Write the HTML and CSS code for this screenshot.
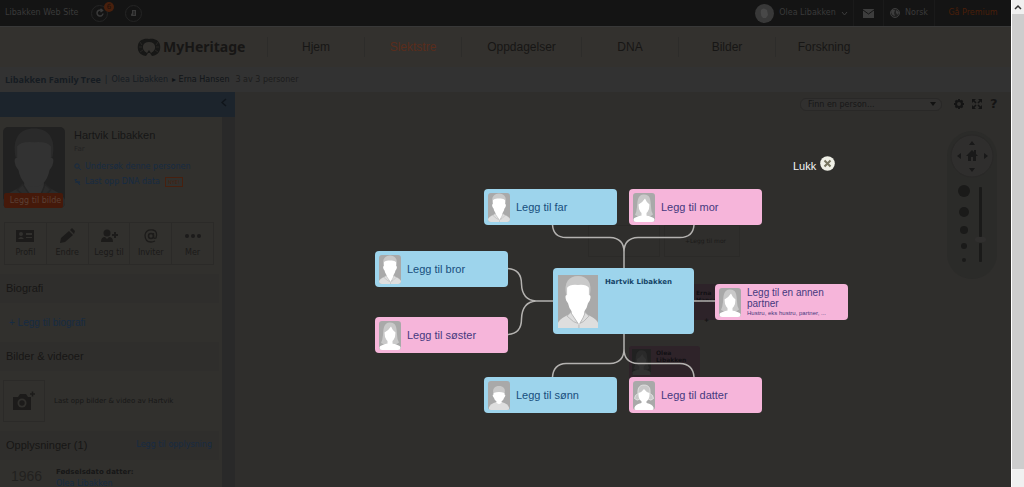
FILE: index.html
```
<!DOCTYPE html>
<html lang="no">
<head>
<meta charset="utf-8">
<title>MyHeritage</title>
<link rel="stylesheet" href="styles.css">
</head>
<body>
<svg class="defs" aria-hidden="true">
  <symbol id="man" viewBox="0 0 44 58" preserveAspectRatio="none">
    <rect width="44" height="58" fill="var(--ph-bg)"/>
    <path d="M0 58V52Q2 47 15 42H29Q42 47 44 52V58Z" fill="var(--ph-cloth)"/>
    <path d="M15 36V44L23 55L29 44V36Z" fill="var(--ph-face)"/>
    <path d="M14 41L10 45L17 51L22 53Q18 47 14 41ZM30 41L34 45L28 51L24 53Q28 47 30 41Z" fill="var(--ph-cloth)" stroke="var(--ph-line)"/>
    <path d="M23 53V58" stroke="var(--ph-line)"/>
    <path d="M9 22C6 8 12 1 22 1S38 8 35 22Z" fill="var(--ph-hair)"/>
    <path d="M10 22V14Q13 10 22 11Q31 10 34 14V22Q37 22 35 28L33 31Q32 37 28 41Q22 45 16 41Q12 37 11 31L9 28Q7 22 10 22Z" fill="var(--ph-face)"/>
  </symbol>
  <symbol id="woman" viewBox="0 0 44 58" preserveAspectRatio="none">
    <rect width="44" height="58" fill="var(--ph-bg)"/>
    <path d="M22 3C8 3 9 19 8 28Q7 38 4 44Q12 49 18 45H28Q34 49 40 43Q36 37 36 27C35 13 35 3 22 3Z" fill="var(--ph-hair)"/>
    <path d="M1 58V52Q3 48 17 45V36H27V45Q41 48 43 52V58Z" fill="var(--ph-face)"/>
    <path d="M24 11Q19 19 11 23Q11 33 15 38Q22 44 29 38Q33 33 33 23Q27 19 24 11Z" fill="var(--ph-face)"/>
  </symbol>
  <symbol id="boy" viewBox="0 0 44 58" preserveAspectRatio="none">
    <rect width="44" height="58" fill="var(--ph-bg)"/>
    <path d="M2 58V53Q4 45 17 42H27Q40 45 42 53V58Z" fill="var(--ph-cloth)"/>
    <path d="M17 36H27V43Q22 49 17 43Z" fill="var(--ph-face)"/>
    <path d="M11 25C8 15 14 10 22 10S36 15 33 25Z" fill="var(--ph-hair)"/>
    <path d="M11 24Q22 20 33 24V27Q36 27 34 31L32 34Q31 38 28 40Q22 44 16 40Q13 38 12 34L10 31Q8 27 11 27Z" fill="var(--ph-face)"/>
  </symbol>
  <symbol id="girl" viewBox="0 0 44 58" preserveAspectRatio="none">
    <rect width="44" height="58" fill="var(--ph-bg)"/>
    <path d="M22 8C11 8 9 17 10 25Q3 28 3 35Q8 41 14 36H30Q36 41 41 35Q41 28 34 25C35 16 33 8 22 8Z" fill="var(--ph-hair)" stroke="var(--ph-face)"/>
    <path d="M3 58V53Q5 46 17 44V37H27V44Q39 46 41 53V58Z" fill="var(--ph-face)"/>
    <path d="M22 16Q18 22 11 24Q10 34 15 39Q22 44 29 39Q34 34 33 24Q26 22 22 16Z" fill="var(--ph-face)"/>
  </symbol>
</svg>

<div class="page">
  <header class="topbar">
    <span class="site">Libakken Web Site</span>
    <button class="round" aria-label="Treff"><svg width="10" height="10" viewBox="0 0 10 10"><path d="M8 5.500A3 3 0 1 1 6.500 2.400M5.500 .8L7.500 2.500L5.500 4" fill="none" stroke="#3a3a3a" stroke-width="1.500"/></svg><span class="badge">6</span></button>
    <button class="round" aria-label="Varsler"><svg width="10" height="10" viewBox="0 0 10 10"><path d="M3 2H7V8H3Q1.500 8 2 6.500L3 5Z" fill="#3a3a3a"/><path d="M4 4H6M4 6H6" stroke="#141414"/></svg></button>
    <div class="account">
      <button class="user"><span class="face"><svg width="19" height="19" viewBox="0 0 19 19"><circle cx="9.500" cy="9.500" r="9.500" fill="#383838"/><path d="M6 6Q8 3 12 6L13 11L11 14H8Q5 12 6 6Z" fill="#484848"/></svg></span>Olea Libakken<svg width="7" height="5" viewBox="0 0 7 5"><path d="M1 1L3.500 4L6 1" fill="none" stroke="#3d3d3d"/></svg></button>
      <a class="mail" href="#" aria-label="Innboks"><svg width="11" height="9" viewBox="0 0 11 9"><rect width="11" height="9" fill="#3d3d3d"/><path d="M0 1L5.500 5L11 1" fill="none" stroke="#151515"/></svg></a>
      <a class="lang" href="#"><svg width="10" height="10" viewBox="0 0 10 10"><circle cx="5" cy="5" r="4.500" fill="#202020" stroke="#3d3d3d"/><path d="M2 1.500L5 2L4 5L5 8L2.500 7L1 4ZM6 2L9 4L8 7L6 5Z" fill="#3d3d3d"/></svg>Norsk</a>
      <a class="premium" href="#">Gå Premium</a>
    </div>
  </header>

  <nav class="mainnav">
    <a class="logo" href="#"><svg width="24" height="19" viewBox="0 0 24 19"><path d="M9 18C2 17 0 12 1 7S7 0 12 1C17 0 22 2 23 7S22 17 15 18L13 15H11Z" fill="#171716"/><path d="M10 15Q5 12 6 8T12 4T18 8T14 15L12 12Z" fill="#33312e"/><path d="M3 4L5 7M2 9H5M3 14L6 12M21 4L19 7M22 9H19M21 14L18 12" stroke="#33312e" stroke-width=".6"/></svg><span>MyHeritage</span></a>
    <a class="item" href="#">Hjem</a>
    <a class="item on" href="#">Slektstre</a>
    <a class="item wide" href="#">Oppdagelser</a>
    <a class="item" href="#">DNA</a>
    <a class="item" href="#">Bilder</a>
    <a class="item" href="#">Forskning</a>
  </nav>

  <div class="crumbs"><strong>Libakken Family Tree</strong><span class="bar">|</span><span>Olea Libakken</span><b>▸ Erna Hansen</b><span class="count">3 av 3 personer</span></div>

  <div class="body">
    <aside class="side">
      <div class="bluebar"><button aria-label="Skjul panel"><svg width="6" height="9" viewBox="0 0 6 9"><path d="M5 1L1 4.500L5 8" fill="none" stroke="#10151a" stroke-width="1.500"/></svg></button></div>
      <div class="sidemain">
        <div class="panel">
          <div class="profile">
            <div class="photo"><svg class="dim"><use href="#man"/></svg><button>Legg til bilde</button></div>
            <div class="facts">
              <h2>Hartvik Libakken</h2>
              <span class="rel">Far</span>
              <a href="#"><svg width="7" height="7" viewBox="0 0 7 7"><circle cx="3" cy="3" r="2.200" fill="none" stroke="#172b42"/><path d="M4.500 4.500L7 7" stroke="#172b42"/></svg>Undersøk denne personen</a>
              <a href="#"><svg width="7" height="7" viewBox="0 0 7 7"><path d="M1 1Q1 4 6 4M1 4Q4 3 6 7M3 1L1 3M6 4L4 6" fill="none" stroke="#172b42"/></svg>Last opp DNA data<span class="new">NYE!</span></a>
            </div>
          </div>
          <div class="actions">
            <button><svg width="18" height="16" viewBox="0 0 18 16"><rect y="2" width="18" height="12" fill="#1c1b1a"/><circle cx="5" cy="6" r="2" fill="#31302d"/><path d="M2 11Q5 7 8 11ZM10 5H16V7H10ZM10 9H16V10H10Z" fill="#31302d"/></svg>Profil</button>
            <button><svg width="18" height="16" viewBox="0 0 18 16"><path d="M2 15L3 10L11 3L15 7L7 14ZM12 2L14 0L17 3L16 6Z" fill="#1c1b1a"/></svg>Endre</button>
            <button><svg width="18" height="16" viewBox="0 0 18 16"><circle cx="7" cy="5" r="3.500" fill="#1c1b1a"/><path d="M1 14Q1 9 5 9L7 11L9 9Q13 9 13 14ZM12 6H18V8H12ZM14 4H16V10H14Z" fill="#1c1b1a"/></svg>Legg til</button>
            <button><svg width="18" height="16" viewBox="0 0 18 16"><circle cx="9" cy="8" r="2.500" fill="none" stroke="#1c1b1a" stroke-width="1.500"/><path d="M11.500 5V9Q12 11 14 10Q16 3 11 2Q4 1 3 7Q3 14 9 14Q11 14 13 13" fill="none" stroke="#1c1b1a" stroke-width="1.300"/></svg>Inviter</button>
            <button><svg width="18" height="16" viewBox="0 0 18 16"><circle cx="3" cy="8" r="2" fill="#1c1b1a"/><circle cx="9" cy="8" r="2" fill="#1c1b1a"/><circle cx="15" cy="8" r="2" fill="#1c1b1a"/></svg>Mer</button>
          </div>
          <h3>Biografi</h3>
          <div class="bio"><a href="#">+ Legg til biografi</a></div>
          <h3>Bilder &amp; videoer</h3>
          <div class="media"><button aria-label="Last opp bilder"><svg width="24" height="20" viewBox="0 0 24 20"><path d="M1 6H6L8 3H14L16 6H19V19H1Z" fill="#1c1b1a"/><circle cx="10" cy="12" r="4.500" fill="#31302d"/><circle cx="10" cy="12" r="2.700" fill="#1c1b1a"/><path d="M18 3H23M20.500 .5V5.500" stroke="#1c1b1a" stroke-width="1.500"/></svg></button><span>Last opp bilder &amp; video av Hartvik</span></div>
          <h3>Opplysninger (1)<a href="#">Legg til opplysning</a></h3>
          <div class="event"><span class="year">1966</span><div><b>Fødselsdato datter:</b><a href="#">Olea Libakken</a></div></div>
        </div>
        <div class="sidescroll"></div>
      </div>
    </aside>

    <main class="tree">
      <div class="tools">
        <input type="text" aria-label="Finn en person" placeholder="Finn en person...">
        <button aria-label="Innstillinger"><svg width="10" height="10" viewBox="0 0 10 10"><circle cx="5" cy="5" r="3" fill="none" stroke="#141414" stroke-width="2"/><path d="M5 0V1.500M5 8.500V10M0 5H1.500M8.500 5H10M1.500 1.500L2.500 2.500M7.500 7.500L8.500 8.500M8.500 1.500L7.500 2.500M2.500 7.500L1.500 8.500" stroke="#141414" stroke-width="2"/></svg></button>
        <button aria-label="Fullskjerm"><svg width="10" height="10" viewBox="0 0 10 10"><path d="M0 0H4L0 4ZM10 0V4L6 0ZM0 10V6L4 10ZM10 10H6L10 6Z" fill="#141414"/><path d="M1 1L4 4M9 1L6 4M1 9L4 6M9 9L6 6" stroke="#141414" stroke-width="1.500"/></svg></button>
        <button class="help" aria-label="Hjelp">?</button>
      </div>
      <svg class="zoomer" width="52" height="150" viewBox="0 0 52 150">
        <rect x="1" y="1" width="50" height="148" rx="25" fill="#2b2b29"/>
        <circle cx="26" cy="26" r="21" fill="#2f2e2d" stroke="#292827"/>
        <path d="M26 11L29 15H23ZM26 42L23 38H29ZM11 26L15 23V29ZM42 26L38 23V29Z" fill="#191919"/>
        <path d="M20 26L26 20L28 22V20H30V24L32 26H30V31H27V27H25V31H22V26Z" fill="#191919"/>
        <g fill="#1a1a19"><circle cx="18" cy="61" r="6"/><circle cx="18" cy="82" r="5"/><circle cx="18" cy="100" r="4"/><circle cx="18" cy="116" r="3"/><circle cx="18" cy="130" r="2"/><rect x="33" y="57" width="3" height="50" rx="1"/><rect x="33" y="113" width="3" height="19" rx="1"/></g>
        <rect x="29" y="107" width="11" height="5" rx="2" fill="#302f2e"/>
      </svg>
    </main>
  </div>
</div>

<div class="scrollbar"><div class="up"><svg width="8" height="6" viewBox="0 0 8 6"><path d="M1 5L4 2L7 5" fill="none" stroke="#333" stroke-width="1.500"/></svg></div><div class="thumb"></div><div class="rest"></div></div>

<section class="dialog" aria-label="Legg til slektning">
  <div class="ghost g1"></div>
  <div class="ghost g2">+Legg til mor</div>
  <div class="ghost g3">Erna<br>Hansen</div>
  <div class="ghost plus">+</div>
  <div class="ghost g4"><svg class="dim"><use href="#woman"/></svg><span>Olea<br>Libakken</span></div>
  <svg class="lines" width="350" height="200" viewBox="500 200 350 200"><path d="M552.500 225Q553.500 237.500 566 237.500H610Q624 238 624 252V268M694 225Q693 237.500 680 237.500H638Q624 238 624 252M507 268.500Q521.500 269 521.500 284Q522 300 536 301H553M507 334.500Q521.500 334 521.500 319Q522 302 536 301M694 301H716M624 334V349Q624 363 610 363.500H566Q553.500 364 552.500 377M624 349Q624 363 638 363.500H680Q693 364 694 377" fill="none" stroke="#b4b2b0" stroke-width="1.500"/></svg>
  <button class="close"><span>Lukk</span><svg width="15" height="15" viewBox="0 0 15 15"><circle cx="7.500" cy="7.500" r="7.300" fill="#efefe6"/><path d="M4.500 4.500L10.500 10.500M10.500 4.500L4.500 10.500" stroke="#77745f" stroke-width="2"/></svg></button>
  <button class="card male far"><svg><use href="#man"/></svg><span>Legg til far</span></button>
  <button class="card female mor"><svg><use href="#woman"/></svg><span>Legg til mor</span></button>
  <button class="card male bror"><svg><use href="#man"/></svg><span>Legg til bror</span></button>
  <button class="card female soster"><svg><use href="#woman"/></svg><span>Legg til søster</span></button>
  <div class="person"><svg><use href="#man"/></svg><strong>Hartvik Libakken</strong></div>
  <button class="card female partner"><svg><use href="#woman"/></svg><span>Legg til en annen partner<small>Hustru, eks hustru, partner, ...</small></span></button>
  <button class="card male sonn"><svg><use href="#boy"/></svg><span>Legg til sønn</span></button>
  <button class="card female datter"><svg><use href="#girl"/></svg><span>Legg til datter</span></button>
</section>
</body>
</html>
```
FILE: styles.css
```
* { box-sizing: border-box; }
html, body { height: 100%; }
body {
  margin: 0;
  display: flex;
  overflow: hidden;
  position: relative;
  background: #2f2e2c;
  font: 8px/12px "DejaVu Sans", sans-serif;
  color: #171717;
  --ph-bg: #a9a9a9;
  --ph-hair: #c9c9c9;
  --ph-face: #ffffff;
  --ph-cloth: #dedede;
  --ph-line: #b5b5b5;
}
a { color: inherit; text-decoration: none; }
button { padding: 0; border: 0; background: none; font: inherit; color: inherit; }
svg { flex: none; }
.defs { position: absolute; width: 0; height: 0; }
.dim {
  --ph-bg: #212121;
  --ph-hair: #2a2a2a;
  --ph-face: #323232;
  --ph-cloth: #2b2b2b;
  --ph-line: #252525;
}

.page { flex: 1; min-width: 0; display: flex; flex-direction: column; }

.topbar { flex: none; height: 26px; display: flex; align-items: center; padding-left: 5px; background: #141414; color: #3a3a3a; }
.site { width: 86px; white-space: nowrap; }
.round { position: relative; width: 17px; height: 17px; margin-right: 17px; display: flex; align-items: center; justify-content: center; border: 1px solid #242424; border-radius: 50%; }
.badge { position: absolute; top: -4px; right: -7px; width: 10px; height: 10px; border-radius: 50%; background: #48200d; color: #1e100a; font-size: 7px; line-height: 10px; }
.account { margin-left: auto; display: flex; align-self: stretch; }
.account > * { display: flex; align-items: center; justify-content: center; border-right: 1px solid #1a1a1a; }
.user { gap: 5px; width: 104px; white-space: nowrap; }
.face { display: flex; }
.mail { width: 30px; }
.lang { width: 51px; gap: 5px; }
.account .premium { width: 76px; border: 0; color: #4a1f09; }

.mainnav { flex: none; height: 41px; display: flex; align-items: center; padding-left: 137px; background: #33312e; font: 12px/16px "Liberation Sans", sans-serif; color: #171615; border-top: 1px solid #383838; }
.logo { display: flex; align-items: center; gap: 2px; width: 130px; }
.logo span { font: bold 14px/20px "Noto Sans", sans-serif; }
.item { width: 97px; height: 20px; line-height: 20px; text-align: center; border-left: 1px solid #2d2c2a; }
.item.wide { width: 120px; }
.item.on { color: #5a2d1c; }

.crumbs { flex: none; height: 25px; display: flex; align-items: center; gap: 4px; padding-left: 5px; background: #323232; color: #161c22; white-space: nowrap; }
.crumbs strong { font: bold 9px/12px "Open Sans", sans-serif; }
.crumbs b { font-weight: normal; color: #101418; }
.crumbs .count { padding-left: 2px; color: #1c1c1c; }

.body { flex: 1; min-height: 0; display: flex; }
.side { flex: none; width: 235px; display: flex; flex-direction: column; background: #31302d; overflow: hidden; }
.bluebar { flex: none; height: 25px; display: flex; align-items: center; justify-content: flex-end; padding-right: 8px; background: #1c242c; }
.sidemain { flex: 1; min-height: 0; display: flex; }
.panel { flex: 1; min-width: 0; overflow: hidden; }
.sidescroll { flex: none; width: 13px; background: #292929; }
.profile { display: flex; gap: 9px; height: 105px; padding: 10px 0 0 3px; }
.photo { position: relative; flex: none; width: 62px; height: 81px; }
.photo svg { display: block; width: 62px; height: 81px; border-radius: 5px; }
.photo button { position: absolute; left: 1px; bottom: 0; width: 59px; height: 15px; padding-left: 4px; overflow: hidden; background: #45190a; color: #5a4035; white-space: nowrap; border-radius: 2px; }
.facts { display: flex; flex-direction: column; white-space: nowrap; }
.facts h2 { margin: 0; font: 11px/16px "Liberation Sans", sans-serif; color: #161616; }
.rel { height: 16px; font-size: 7px; color: #222; }
.facts a { display: flex; align-items: center; gap: 4px; height: 15px; color: #172b42; }
.new { margin-left: 1px; padding: 0 2px; border: 1px solid #47200f; color: #47200f; font-size: 5px; line-height: 8px; }
.actions { display: flex; width: 210px; height: 43px; margin-left: 4px; border: 1px solid #2b2a28; }
.actions button { flex: 1; display: flex; flex-direction: column; align-items: center; gap: 3px; padding-top: 5px; border-right: 1px solid #2b2a28; color: #1b1a19; }
.actions button:last-child { border: 0; }
h3 { display: flex; justify-content: space-between; height: 29px; margin: 0 3px 0 0; padding: 0 7px 0 6px; background: #2f2e2c; font: 11px/28px "Liberation Sans", sans-serif; color: #171615; }
.actions + h3 { margin-top: 9px; }
h3 a { font: 8px/28px "DejaVu Sans", sans-serif; color: #172b42; }
.bio { height: 39px; padding-left: 9px; font: 10px/39px "Liberation Sans", sans-serif; color: #172b42; }
.media { display: flex; align-items: center; gap: 9px; height: 60px; padding-left: 3px; font-size: 7px; }
.media button { width: 42px; height: 42px; display: flex; align-items: center; justify-content: center; border: 1px solid #2b2a28; }
.event { display: flex; gap: 14px; padding: 6px 0 0 11px; }
.event div { display: flex; flex-direction: column; }
.event b { font-size: 7px; }
.event a { color: #172b42; }
.year { width: 31px; font: 14px/20px "Liberation Sans", sans-serif; color: #22211f; }

.tree { flex: 1; min-width: 0; display: flex; flex-direction: column; align-items: flex-end; padding-right: 11px; }
.tools { display: flex; align-items: center; gap: 8px; height: 24px; margin-bottom: 14px; }
.tools input { width: 142px; height: 13px; margin-right: 4px; padding: 0 7px; border: 1px solid #292827; border-radius: 6px; background: #31302f url("data:image/svg+xml,%3Csvg xmlns='http://www.w3.org/2000/svg' width='6' height='4'%3E%3Cpath d='M0 0H6L3 4Z' fill='%23111'/%3E%3C/svg%3E") no-repeat right 5px center; font: inherit; }
.tools input::placeholder { color: #171717; opacity: 1; }
.tools button { display: flex; }
.help { width: 10px; font: bold 13px/14px "DejaVu Sans", sans-serif; color: #141414; }
.zoomer { margin-right: 2px; }

.scrollbar { flex: none; width: 13px; display: flex; flex-direction: column; background: #cdcdcd; border-left: 1px solid #fff; }
.up { height: 14px; display: flex; align-items: center; justify-content: center; background: #f0f0f0; }
.thumb { flex: 1; }
.rest { height: 18px; background: #f0f0f0; }

.dialog { position: absolute; left: 0; top: 0; }
.dialog > * { position: absolute; }
.lines { left: 500px; top: 200px; }
.close { left: 793px; top: 156px; display: flex; gap: 4px; color: #f4f4f4; font: 11px/20px "Liberation Sans", sans-serif; }
.card { display: flex; align-items: center; gap: 6px; width: 133px; height: 36px; padding-left: 4px; border-radius: 4px; text-align: left; font: 11px/12px "Liberation Sans", sans-serif; }
.card svg { width: 22px; height: 29px; border-radius: 3px; }
.male { background: #9dd4ec; color: #174e7c; }
.female { background: #f6b5da; color: #45397e; }
.far { left: 484px; top: 189px; }
.mor { left: 629px; top: 189px; }
.bror { left: 375px; top: 251px; }
.soster { left: 375px; top: 317px; }
.partner { left: 715px; top: 284px; font-size: 10px; line-height: 11px; }
.partner small { display: block; font-size: 6px; line-height: 8px; white-space: nowrap; }
.sonn { left: 484px; top: 377px; }
.datter { left: 629px; top: 377px; }
.person { left: 553px; top: 268px; width: 141px; height: 66px; display: flex; gap: 7px; padding: 7px 5px; border-radius: 4px; background: #9dd4ec; color: #154468; }
.person svg { width: 40px; height: 53px; }
.person strong { font: bold 7px/14px "DejaVu Sans", sans-serif; white-space: nowrap; }
.ghost { color: #1b1a19; font-size: 6px; line-height: 7px; white-space: nowrap; }
.g1 { left: 588px; top: 225px; width: 72px; height: 32px; border: 1px solid #2b2a28; }
.g2 { left: 664px; top: 225px; width: 76px; height: 32px; padding: 11px 20px; border: 1px solid #2b2a28; }
.g3 { left: 690px; top: 284px; width: 30px; height: 36px; padding: 5px 6px; background: #2d2329; color: #121014; font-weight: bold; }
.plus { left: 704px; top: 316px; font-weight: bold; color: #111; }
.g4 { left: 629px; top: 346px; width: 71px; height: 38px; display: flex; gap: 5px; padding: 3px; background: #2e2329; color: #121014; font-weight: bold; border-radius: 3px; }
.g4 svg { width: 19px; height: 26px; }
```
